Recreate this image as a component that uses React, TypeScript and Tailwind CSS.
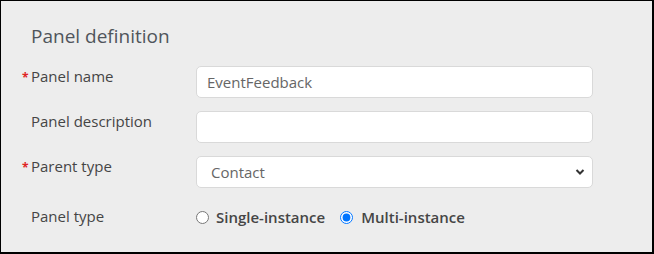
import { useState } from "react";

const labelCls =
  "relative -mt-[1px] text-[15px] leading-[22px] font-medium text-[#454545]";
const fieldCls =
  "h-[32px] w-[397px] rounded-[5px] border border-[#d9d9d9] bg-white text-[15px] text-[#666] outline-none";

function Required() {
  return (
    <span className="absolute -left-[9px] top-[2px] text-[12px] font-bold text-[#e02424]">
      *
    </span>
  );
}

export default function App() {
  const [panelType, setPanelType] = useState("multi");

  return (
    <div
      className="h-[254px] w-[654px] border-t border-l border-r-2 border-b-2 border-black bg-[#ededed] pl-[30px] pt-[21px]"
      style={{ fontFamily: '"Open Sans", sans-serif' }}
    >
      <h2 className="text-[19px] leading-[28px] font-normal text-[#50555b]">
        Panel definition
      </h2>

      <div className="mt-[16px] grid grid-cols-[165px_397px] gap-y-[13px]">
        <label className={labelCls}>
          <Required />
          Panel name
        </label>
        <input className={`${fieldCls} px-[10px]`} defaultValue="EventFeedback" />

        <label className={labelCls}>Panel description</label>
        <input className={`${fieldCls} px-[10px]`} />

        <label className={labelCls}>
          <Required />
          Parent type
        </label>
        <div className="relative">
          <select className={`${fieldCls} appearance-none pl-[14px]`} defaultValue="Contact">
            <option>Contact</option>
          </select>
          <svg
            className="pointer-events-none absolute right-[8px] top-[12px]"
            width="10"
            height="8"
            viewBox="0 0 10 8"
          >
            <path d="M1.5 2 L5 5.5 L8.5 2" fill="none" stroke="#333" strokeWidth="2" />
          </svg>
        </div>

        <label className={`${labelCls} mt-[4px]`}>Panel type</label>
        <div className="mt-[5px] flex items-center text-[15px] leading-[22px] font-[580] text-[#454545]">
          <label className="flex items-center">
            <input
              type="radio"
              name="ptype"
              className="m-0 h-[13px] w-[13px]"
              checked={panelType === "single"}
              onChange={() => setPanelType("single")}
            />
            <span className="ml-[7px]">Single-instance</span>
          </label>
          <label className="ml-[15px] flex items-center">
            <input
              type="radio"
              name="ptype"
              className="m-0 h-[13px] w-[13px]"
              checked={panelType === "multi"}
              onChange={() => setPanelType("multi")}
            />
            <span className="ml-[8px]">Multi-instance</span>
          </label>
        </div>
      </div>
    </div>
  );
}
